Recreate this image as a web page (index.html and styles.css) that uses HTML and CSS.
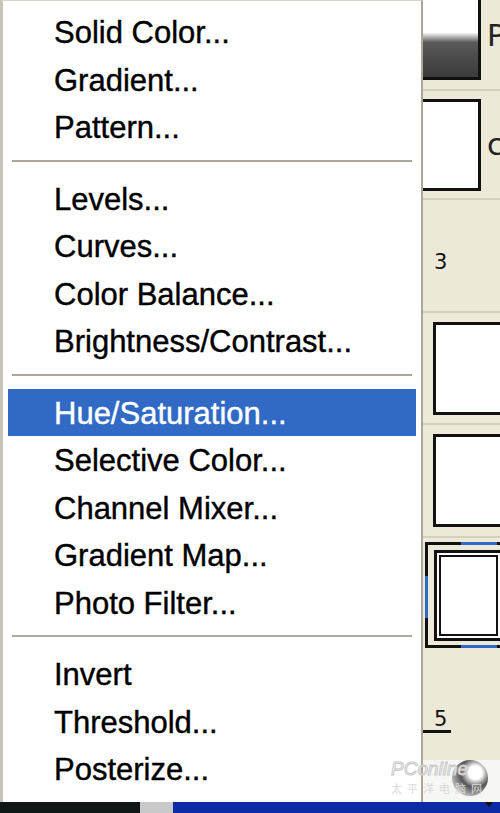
FILE: index.html
```html
<!DOCTYPE html>
<html>
<head>
<meta charset="utf-8">
<link rel="stylesheet" href="styles.css">
</head>
<body>
<div class="screen">
  <div class="menu">
    <div class="item">Solid Color...</div>
    <div class="item">Gradient...</div>
    <div class="item">Pattern...</div>
    <div class="sep"></div>
    <div class="item">Levels...</div>
    <div class="item">Curves...</div>
    <div class="item">Color Balance...</div>
    <div class="item">Brightness/Contrast...</div>
    <div class="sep"></div>
    <div class="item active">Hue/Saturation...</div>
    <div class="item">Selective Color...</div>
    <div class="item">Channel Mixer...</div>
    <div class="item">Gradient Map...</div>
    <div class="item">Photo Filter...</div>
    <div class="sep"></div>
    <div class="item">Invert</div>
    <div class="item">Threshold...</div>
    <div class="item">Posterize...</div>
  </div>
  <div class="panel">
    <div class="row r1"><div class="thumb dark"></div><span class="letter">P</span></div>
    <div class="row r2"><div class="thumb plain"></div><span class="letter">c</span></div>
    <div class="row r3"><span class="num">3</span></div>
    <div class="row r4"><div class="box"></div></div>
    <div class="row r5"><div class="box"></div></div>
    <div class="row r6"><div class="sel"><div class="box inner"></div></div></div>
    <div class="row r7"><span class="num u">5</span></div>
    <div class="row r8"></div>
  </div>
  <div class="taskbar">
    <div class="tb-dark"></div>
    <div class="tb-gray"></div>
    <div class="tb-blue"><span class="tri"></span></div>
  </div>
  <div class="watermark">
    <div class="wm-ball"></div>
    <div class="wm-text">PConline</div>
    <div class="wm-cn">太平洋电脑网</div>
  </div>
</div>
</body>
</html>
```
FILE: styles.css
```css
html, body {
  margin: 0;
  padding: 0;
  background: #ece9d8;
}
.screen {
  position: relative;
  width: 500px;
  height: 813px;
  overflow: hidden;
  display: grid;
  grid-template-columns: 423px 77px;
  grid-template-rows: 802px 11px;
  font-family: "Liberation Sans", Arial, sans-serif;
}
.menu {
  background: #fff;
  border-left: 3px solid #c8c4b4;
  border-top: 1px solid #d8d4c4;
  border-right: 2px solid #aaa797;
  padding: 7px 5px 7px 5px;
  display: flex;
  flex-direction: column;
}
.item {
  height: 47.5px;
  line-height: 49px;
  padding-left: 46px;
  font-size: 31px;
  color: #000;
  white-space: nowrap;
  -webkit-text-stroke: 0.4px #000;
}
.item.active {
  background: #316ac5;
  color: #fff;
  -webkit-text-stroke: 0.4px #fff;
}
.sep {
  height: 24px;
  display: flex;
  align-items: center;
  padding: 0 4px;
}
.sep::before {
  content: "";
  flex: 1;
  height: 2px;
  background: #aca899;
  margin-top: -4px;
}
.panel {
  display: flex;
  flex-direction: column;
  background: #ece9d8;
  overflow: hidden;
}
.row {
  position: relative;
  display: flex;
  align-items: center;
  border-bottom: 2px solid #d3d0c0;
  box-sizing: border-box;
}
.r1 { height: 91px; align-items: flex-start; }
.r2 { height: 109px; }
.r3 { height: 113px; padding-top: 12px; }
.r4 { height: 112px; padding-left: 10px; }
.r5 { height: 113px; padding-left: 10px; }
.r6 { height: 112px; border-bottom: none; padding-left: 2px; }
.r7 { height: 110px; border-bottom: none; }
.r8 { flex: 1; border-bottom: none; background: #f6f6f4; }
.thumb {
  flex-shrink: 0;
  width: 55px;
  border: 3px solid #111;
  border-left: none;
  background: #fff;
}
.thumb.dark {
  height: 77px;
  border-top: none;
  background: linear-gradient(#fff 0 42%, #5a5a5a 55%, #4a4a4a 75%, #3c3c3c 100%);
}
.thumb.plain {
  height: 86px;
}
.letter {
  flex-shrink: 0;
  font-family: "DejaVu Sans", sans-serif;
  font-size: 30px;
  color: #222;
  margin-left: 6px;
}
.r1 .letter { margin-top: 18px; }
.num {
  font-family: "DejaVu Sans", sans-serif;
  font-size: 21px;
  color: #111;
  margin-left: 11px;
}
.num.u {
  margin: 30px 0 0 0;
  padding: 0 4px 0 11px;
  border-bottom: 3px solid #111;
  line-height: 22px;
}
.box {
  flex: 1;
  height: 87px;
  border: 3px solid #111;
  border-right: none;
  background: #fff;
}
.sel {
  position: relative;
  flex: 1;
  height: 106px;
  margin-top: 2px;
  box-sizing: border-box;
  border: 3px solid #316ac5;
  border-right: none;
  padding: 5px 0 4px 6px;
  display: flex;
}
.sel::before {
  content: "";
  position: absolute;
  left: -3px;
  top: -3px;
  right: 0;
  bottom: -3px;
  background:
    linear-gradient(#111, #111) 0 0 / 36px 3px no-repeat,
    linear-gradient(#111, #111) 0 100% / 36px 3px no-repeat,
    linear-gradient(#111, #111) 0 0 / 3px 34px no-repeat,
    linear-gradient(#111, #111) 0 100% / 3px 30px no-repeat,
    linear-gradient(#111, #111) 72px 0 / 8px 3px no-repeat,
    linear-gradient(#111, #111) 72px 100% / 8px 3px no-repeat;
  pointer-events: none;
}
.box.inner {
  height: auto;
  box-shadow: inset 0 0 0 2px #fff, inset 0 0 0 4px #111;
}
.taskbar {
  grid-column: 1 / 3;
  display: flex;
}
.tb-dark { width: 140px; background: #0e1716; }
.tb-gray { width: 33px; background: #c9c9c9; }
.tb-blue {
  flex: 1;
  background: #0b2ca5;
  position: relative;
}
.tri {
  position: absolute;
  right: 7px;
  top: 0;
  width: 0;
  height: 0;
  border-left: 4px solid transparent;
  border-right: 4px solid transparent;
  border-top: 5px solid #111;
}
.watermark {
  position: absolute;
  left: 388px;
  top: 752px;
  width: 112px;
  height: 50px;
  color: #dcdcdc;
}
.wm-ball {
  position: absolute;
  left: 64px;
  top: 8px;
  width: 36px;
  height: 36px;
  border-radius: 50%;
  background: radial-gradient(circle at 65% 35%, #fff 0 20%, #555 45%, #aaa 70%, #eee 100%);
}
.wm-text {
  position: absolute;
  left: 3px;
  top: 6px;
  font-family: "Liberation Sans", sans-serif;
  font-size: 19px;
  font-style: italic;
  color: #fff;
  -webkit-text-stroke: 1px #c8c8c8;
}
.wm-cn {
  position: absolute;
  left: 3px;
  top: 29px;
  font-family: "Noto Sans CJK SC", sans-serif;
  font-size: 11px;
  line-height: 14px;
  letter-spacing: 5px;
  color: #d8d8d8;
}
```
